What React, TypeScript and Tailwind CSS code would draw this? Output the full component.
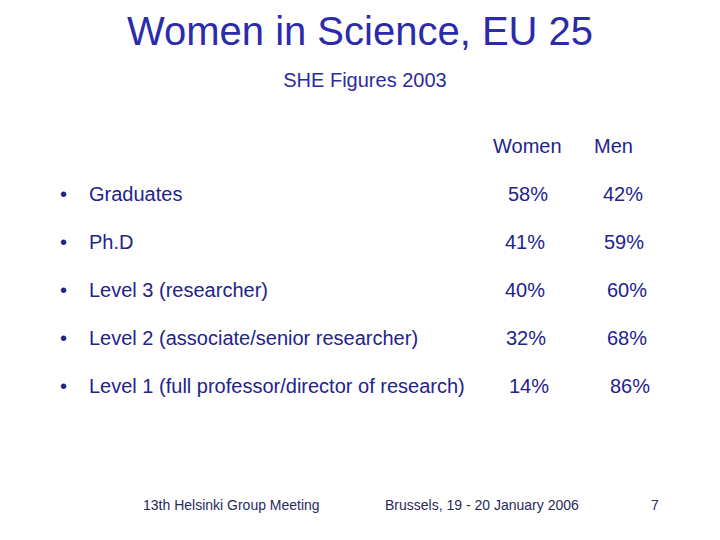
const rows = [
  { label: "Graduates", women: "58%", men: "42%", wPad: "pl-[3px]", mPad: "pl-[0px]" },
  { label: "Ph.D", women: "41%", men: "59%", wPad: "pl-[0px]", mPad: "pl-[1px]" },
  { label: "Level 3 (researcher)", women: "40%", men: "60%", wPad: "pl-[0px]", mPad: "pl-[4px]" },
  { label: "Level 2 (associate/senior researcher)", women: "32%", men: "68%", wPad: "pl-[1px]", mPad: "pl-[4px]" },
  { label: "Level 1 (full professor/director of research)", women: "14%", men: "86%", wPad: "pl-[4px]", mPad: "pl-[7px]" },
];

export default function App() {
  return (
    <div
      className="w-[720px] h-[540px] bg-white flex flex-col overflow-hidden"
      style={{ fontFamily: '"Liberation Sans", Arial, sans-serif' }}
    >
      {/* Title */}
      <h1 className="mt-[7px] text-center text-[40px] leading-[48px] text-[#2b2bab]">
        Women in Science, EU 25
      </h1>
      <div className="mt-[13px] pl-[10px] text-center text-[20px] leading-[24px] text-[#2b2ba0]">
        SHE Figures 2003
      </div>

      {/* Table */}
      <div className="mt-[30px] flex flex-col text-[20px] leading-[48px] text-[#23238c]">
        <div className="flex h-[48px]">
          <div className="w-[493px]" />
          <div className="w-[101px]">Women</div>
          <div>Men</div>
        </div>
        {rows.map((r) => (
          <div key={r.label} className="flex h-[48px]">
            <div className="w-[89px] pl-[60px]">•</div>
            <div className="w-[416px]">{r.label}</div>
            <div className={`w-[98px] ${r.wPad}`}>{r.women}</div>
            <div className={r.mPad}>{r.men}</div>
          </div>
        ))}
      </div>

      {/* Footer */}
      <div className="mt-auto mb-[27px] flex text-[14px] leading-[16px] text-[#2a2a5c]">
        <div className="w-[385px] pl-[143px]">13th Helsinki Group Meeting</div>
        <div className="w-[266px]">Brussels, 19 - 20 January 2006</div>
        <div>7</div>
      </div>
    </div>
  );
}
